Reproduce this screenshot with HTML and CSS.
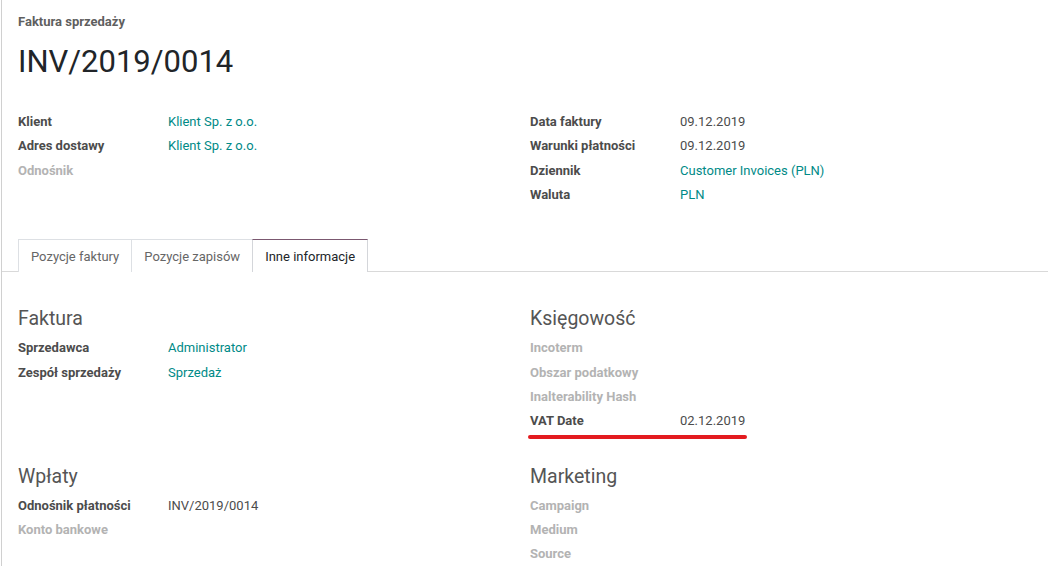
FILE: index.html
```html
<!DOCTYPE html>
<html lang="pl">
<head>
<meta charset="utf-8">
<title>INV/2019/0014</title>
<link rel="stylesheet" href="styles.css">
</head>
<body>
<div class="sheet">
  <div class="head">
    <div class="doc-type">Faktura sprzedaży</div>
    <h1 class="doc-title">INV/2019/0014</h1>
    <div class="cols top-cols">
      <div class="group">
        <div class="row"><span class="label">Klient</span><span class="val link">Klient Sp. z o.o.</span></div>
        <div class="row"><span class="label">Adres dostawy</span><span class="val link">Klient Sp. z o.o.</span></div>
        <div class="row"><span class="label empty">Odnośnik</span><span class="val"></span></div>
      </div>
      <div class="group">
        <div class="row"><span class="label">Data faktury</span><span class="val">09.12.2019</span></div>
        <div class="row"><span class="label">Warunki płatności</span><span class="val">09.12.2019</span></div>
        <div class="row"><span class="label">Dziennik</span><span class="val link">Customer Invoices (PLN)</span></div>
        <div class="row"><span class="label">Waluta</span><span class="val link">PLN</span></div>
      </div>
    </div>
  </div>

  <div class="tabs">
    <div class="tab">Pozycje faktury</div>
    <div class="tab">Pozycje zapisów</div>
    <div class="tab active">Inne informacje</div>
  </div>

  <div class="pane">
    <div class="cols">
      <div class="group">
        <div class="sep">Faktura</div>
        <div class="row"><span class="label">Sprzedawca</span><span class="val link">Administrator</span></div>
        <div class="row"><span class="label">Zespół sprzedaży</span><span class="val link">Sprzedaż</span></div>
      </div>
      <div class="group">
        <div class="sep">Księgowość</div>
        <div class="row"><span class="label empty">Incoterm</span><span class="val"></span></div>
        <div class="row"><span class="label empty">Obszar podatkowy</span><span class="val"></span></div>
        <div class="row"><span class="label empty">Inalterability Hash</span><span class="val"></span></div>
        <div class="row marked"><span class="label">VAT Date</span><span class="val">02.12.2019</span><span class="mark"></span></div>
      </div>
    </div>
    <div class="cols second">
      <div class="group">
        <div class="sep">Wpłaty</div>
        <div class="row"><span class="label">Odnośnik płatności</span><span class="val">INV/2019/0014</span></div>
        <div class="row"><span class="label empty">Konto bankowe</span><span class="val"></span></div>
      </div>
      <div class="group">
        <div class="sep">Marketing</div>
        <div class="row"><span class="label empty">Campaign</span><span class="val"></span></div>
        <div class="row"><span class="label empty">Medium</span><span class="val"></span></div>
        <div class="row"><span class="label empty">Source</span><span class="val"></span></div>
      </div>
    </div>
  </div>
</div>
</body>
</html>
```

FILE: styles.css
```css
html, body {
  margin: 0;
  padding: 0;
  background: #fff;
}
body {
  font-family: Roboto, "Noto Sans", "Liberation Sans", sans-serif;
  font-size: 13px;
  color: #4c4c4c;
  overflow: hidden;
}
.sheet {
  margin-left: 1px;
  border-left: 1px solid #d0d0d0;
  min-height: 566px;
}
.head {
  padding: 12px 0 0 16px;
}
.doc-type {
  font-weight: bold;
  line-height: 20px;
  color: #5f5f5f;
}
.doc-title {
  margin: 11px 0 0 0;
  font-size: 31px;
  font-weight: normal;
  line-height: 38px;
  color: #212529;
}
.cols {
  display: grid;
  grid-template-columns: 512px 1fr;
}
.top-cols {
  margin-top: 29px;
}
.row {
  display: grid;
  grid-template-columns: 150px 1fr;
  line-height: 24.35px;
  height: 24.35px;
  position: relative;
}
.label {
  font-weight: bold;
  color: #4c4c4c;
}
.label.empty {
  color: #b3b3b3;
}
.val {
  color: #4c4c4c;
}
.val.link {
  color: #008a87;
}
.tabs {
  display: flex;
  margin-top: 32px;
  padding-left: 16px;
  border-bottom: 1px solid #d9d9d9;
  height: 32px;
}
.tab {
  box-sizing: border-box;
  height: 33px;
  padding: 0 12px;
  line-height: 33px;
  border: 1px solid #dde0e4;
  border-bottom: none;
  color: #666;
  background: #fff;
}
.tab + .tab {
  margin-left: -1px;
}
.tab.active {
  color: #212529;
  border-color: #d4d6da;
  border-top-color: #7b5870;
  position: relative;
  z-index: 1;
}
.pane {
  padding: 34px 0 0 16px;
}
.sep {
  font-size: 19.5px;
  line-height: 26px;
  color: #555;
  margin-bottom: 4px;
}
.second {
  margin-top: 30px;
}
.mark {
  position: absolute;
  left: -2px;
  top: 26px;
  width: 219px;
  height: 4px;
  border-radius: 2px;
  background: #e31b1f;
}
```
